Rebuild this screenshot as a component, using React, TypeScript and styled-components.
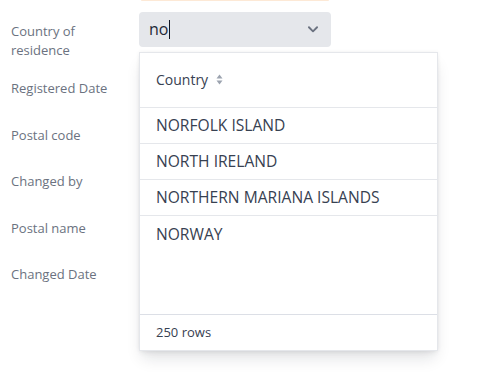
import styled, { createGlobalStyle } from "styled-components";

const GlobalStyle = createGlobalStyle`
  html, body {
    margin: 0;
    padding: 0;
    background: #ffffff;
  }
  body {
    font-family: "Open Sans", "Noto Sans", sans-serif;
    color: #1f2937;
  }
`;

const Page = styled.div`
  min-height: 388px;
`;

const Form = styled.div`
  display: grid;
  grid-template-columns: 128px 192px;
  column-gap: 0;
  row-gap: 11.5px;
  padding-left: 11px;
`;

const PrevEdge = styled.div`
  grid-column: 2;
  height: 1px;
  margin: 0 2px -1.5px 2px;
  background: #fde9d6;
  border-radius: 0 0 4px 4px;
`;

const Label = styled.div<{ $tall?: boolean }>`
  padding-top: 10px;
  margin-bottom: ${(p) => (p.$tall ? "-2px" : "0")};
  font-size: 13px;
  line-height: 19px;
  color: #6b7280;
`;

const Field = styled.div`
  position: relative;
  height: 35px;
`;

const InputBox = styled.div<{ $active?: boolean }>`
  height: 35px;
  box-sizing: border-box;
  border-radius: 4px;
  background: ${(p) => (p.$active ? "#e5e7eb" : "#f3f4f6")};
  display: flex;
  align-items: center;
  padding: 0 10px 0 10px;
  font-size: 16px;
  color: #1f2937;
`;

const Typed = styled.span`
  flex: 1;
  display: flex;
  align-items: center;
`;

const Caret = styled.span`
  display: inline-block;
  width: 1px;
  height: 19px;
  background: #111827;
  margin-left: 1px;
`;

const Chevron = styled.svg`
  width: 14px;
  height: 14px;
  color: #6b7280;
  margin-right: 1px;
`;

const Dropdown = styled.div`
  position: absolute;
  top: 40px;
  left: 0;
  z-index: 10;
  width: 299px;
  height: 299px;
  box-sizing: border-box;
  background: #ffffff;
  border: 1px solid #e5e7eb;
  box-shadow: 0 10px 15px -3px rgba(15, 23, 42, 0.12),
    0 4px 6px -2px rgba(15, 23, 42, 0.06), 0 0 4px rgba(15, 23, 42, 0.06);
  display: flex;
  flex-direction: column;
`;

const Header = styled.div`
  height: 54px;
  flex: none;
  display: flex;
  align-items: center;
  padding-left: 16px;
  font-size: 14px;
  color: #374151;
  border-bottom: 1px solid #e5e7eb;
  gap: 8px;
`;

const SortIcon = styled.svg`
  width: 7px;
  height: 11px;
  color: #9ca3af;
`;

const List = styled.div`
  flex: 1;
  overflow: hidden;
`;

const Row = styled.div<{ $last?: boolean }>`
  height: 36px;
  box-sizing: border-box;
  display: flex;
  align-items: center;
  padding-left: 16px;
  font-size: 15.6px;
  color: #374151;
  border-bottom: ${(p) => (p.$last ? "none" : "1px solid #e5e7eb")};
`;

const Footer = styled.div`
  height: 35px;
  flex: none;
  display: flex;
  align-items: center;
  padding-left: 16px;
  font-size: 13px;
  color: #374151;
  border-top: 1px solid #dcdfe6;
`;

const countries = [
  "NORFOLK ISLAND",
  "NORTH IRELAND",
  "NORTHERN MARIANA ISLANDS",
  "NORWAY",
];

const otherFields = [
  "Registered Date",
  "Postal code",
  "Changed by",
  "Postal name",
  "Changed Date",
];

export default function App() {
  return (
    <Page>
      <GlobalStyle />
      <Form>
        <PrevEdge />
        <Label $tall>
          Country of
          <br />
          residence
        </Label>
        <Field>
          <InputBox $active>
            <Typed>
              no
              <Caret />
            </Typed>
            <Chevron viewBox="0 0 24 24" fill="none" stroke="currentColor" strokeWidth="3.2" strokeLinecap="round" strokeLinejoin="round">
              <path d="M5 9l7 7 7-7" />
            </Chevron>
          </InputBox>
          <Dropdown>
            <Header>
              Country
              <SortIcon viewBox="0 0 7 11" fill="currentColor">
                <path d="M3.5 0.5L6.5 4.5H0.5Z" />
                <path d="M3.5 10.5L6.5 6.5H0.5Z" />
              </SortIcon>
            </Header>
            <List>
              {countries.map((c, i) => (
                <Row key={c} $last={i === countries.length - 1}>
                  {c}
                </Row>
              ))}
            </List>
            <Footer>250 rows</Footer>
          </Dropdown>
        </Field>
        {otherFields.map((f) => [
          <Label key={f}>{f}</Label>,
          <Field key={f + "-field"}>
            <InputBox />
          </Field>,
        ])}
      </Form>
    </Page>
  );
}
